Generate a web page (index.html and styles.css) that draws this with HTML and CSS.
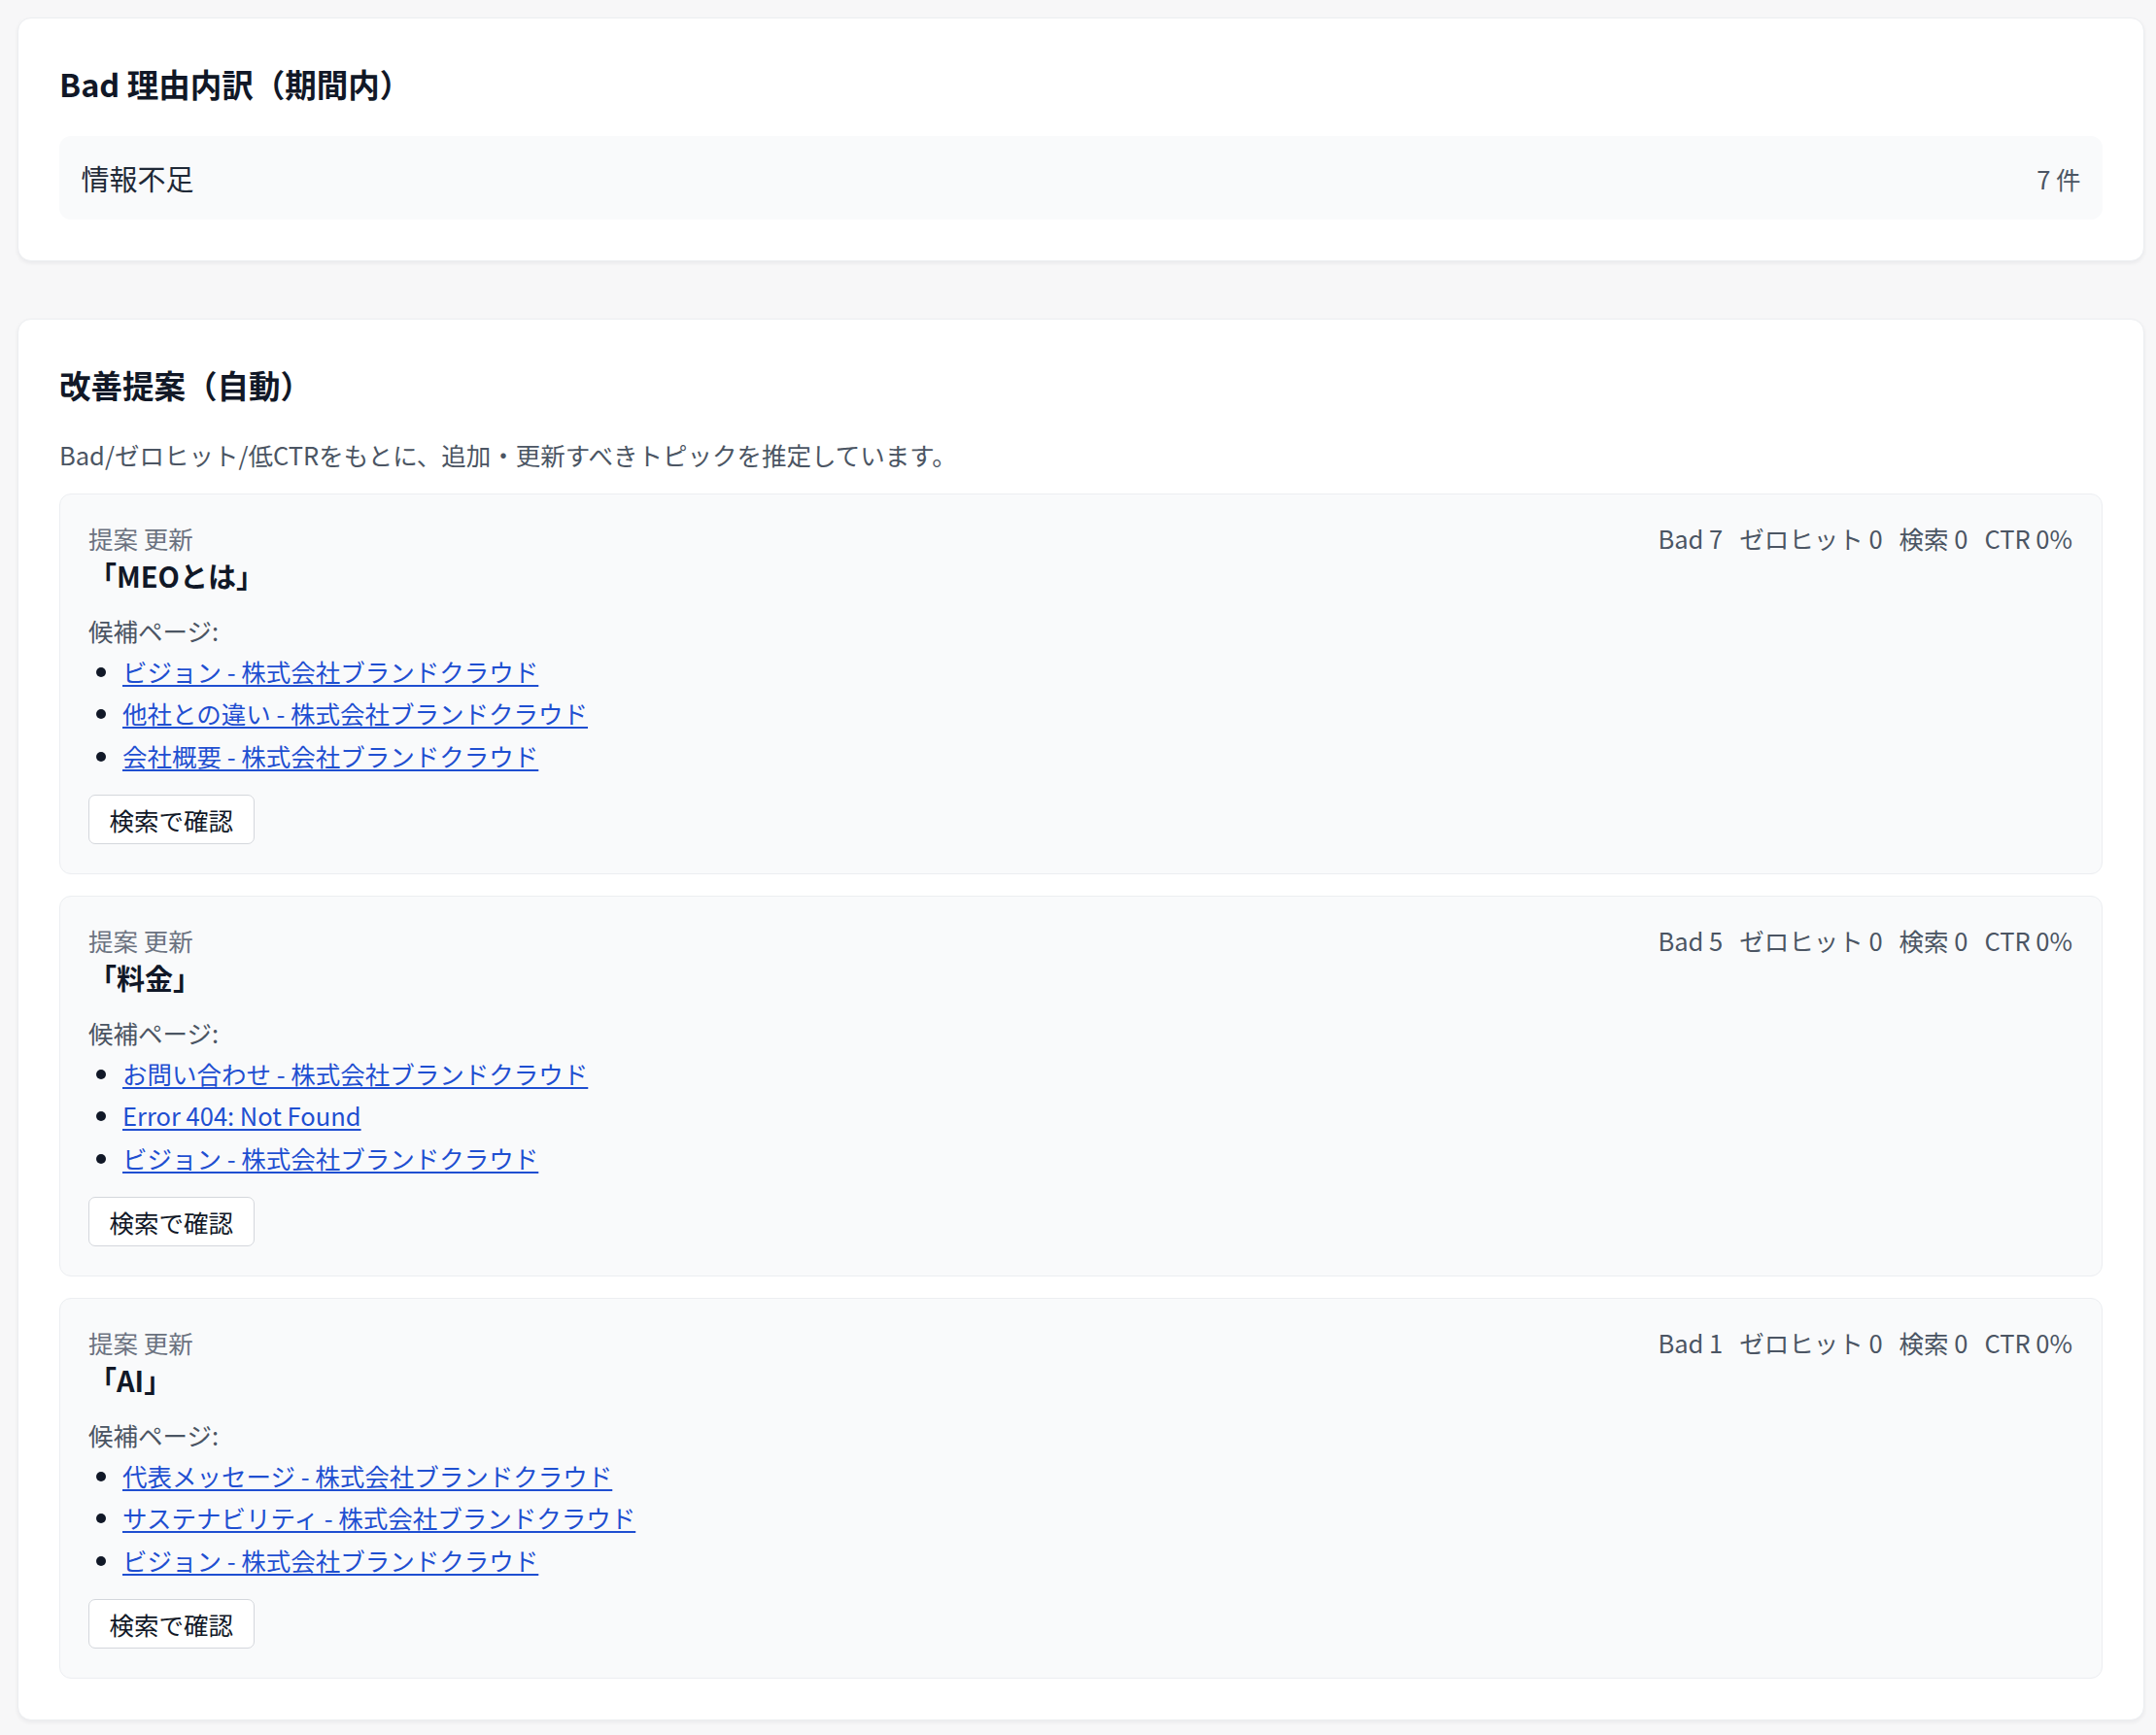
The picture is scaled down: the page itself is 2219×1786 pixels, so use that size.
FILE: index.html
```html
<!DOCTYPE html>
<html lang="ja">
<head>
<meta charset="utf-8">
<title>Bad 理由内訳 / 改善提案</title>
<link rel="stylesheet" href="styles.css">
</head>
<body>
<main class="page">
  <section class="card">
    <h2 class="card-title">Bad 理由内訳（期間内）</h2>
    <div class="reason-row">
      <span class="reason-name">情報不足</span>
      <span class="reason-count">7 件</span>
    </div>
  </section>

  <section class="card">
    <h2 class="card-title">改善提案（自動）</h2>
    <p class="card-desc">Bad/ゼロヒット/低CTRをもとに、追加・更新すべきトピックを推定しています。</p>
    <div class="suggest-list">
      <article class="suggest">
        <div class="suggest-head">
          <div class="suggest-info">
            <div class="suggest-meta">提案 更新</div>
            <div class="suggest-title">「MEOとは」</div>
          </div>
          <div class="suggest-stats"><span>Bad 7</span><span>ゼロヒット 0</span><span>検索 0</span><span>CTR 0%</span></div>
        </div>
        <div class="cand-label">候補ページ:</div>
        <ul class="cand-list">
          <li><a href="#">ビジョン - 株式会社ブランドクラウド</a></li>
          <li><a href="#">他社との違い - 株式会社ブランドクラウド</a></li>
          <li><a href="#">会社概要 - 株式会社ブランドクラウド</a></li>
        </ul>
        <div class="suggest-actions"><button class="check-btn" type="button">検索で確認</button></div>
      </article>

      <article class="suggest">
        <div class="suggest-head">
          <div class="suggest-info">
            <div class="suggest-meta">提案 更新</div>
            <div class="suggest-title">「料金」</div>
          </div>
          <div class="suggest-stats"><span>Bad 5</span><span>ゼロヒット 0</span><span>検索 0</span><span>CTR 0%</span></div>
        </div>
        <div class="cand-label">候補ページ:</div>
        <ul class="cand-list">
          <li><a href="#">お問い合わせ - 株式会社ブランドクラウド</a></li>
          <li><a href="#">Error 404: Not Found</a></li>
          <li><a href="#">ビジョン - 株式会社ブランドクラウド</a></li>
        </ul>
        <div class="suggest-actions"><button class="check-btn" type="button">検索で確認</button></div>
      </article>

      <article class="suggest">
        <div class="suggest-head">
          <div class="suggest-info">
            <div class="suggest-meta">提案 更新</div>
            <div class="suggest-title">「AI」</div>
          </div>
          <div class="suggest-stats"><span>Bad 1</span><span>ゼロヒット 0</span><span>検索 0</span><span>CTR 0%</span></div>
        </div>
        <div class="cand-label">候補ページ:</div>
        <ul class="cand-list">
          <li><a href="#">代表メッセージ - 株式会社ブランドクラウド</a></li>
          <li><a href="#">サステナビリティ - 株式会社ブランドクラウド</a></li>
          <li><a href="#">ビジョン - 株式会社ブランドクラウド</a></li>
        </ul>
        <div class="suggest-actions"><button class="check-btn" type="button">検索で確認</button></div>
      </article>
    </div>
  </section>
</main>
</body>
</html>
```

FILE: styles.css
```css
* {
  box-sizing: border-box;
}

html, body {
  margin: 0;
  padding: 0;
}

body {
  background: #f7f7f8;
  font-family: "Noto Sans CJK JP", "Noto Sans", sans-serif;
  color: #111827;
}

.page {
  display: flex;
  flex-direction: column;
  gap: 59px;
  padding: 18px 12px 14px 18px;
}

.card {
  background: #ffffff;
  border: 1px solid #eceef1;
  border-radius: 14px;
  box-shadow: 0 2px 4px rgba(17, 24, 39, 0.06);
  padding: 42px;
}

.card-title {
  margin: 0 0 30px;
  font-size: 32.5px;
  line-height: 49px;
  font-weight: 700;
  color: #111827;
}

.reason-row {
  display: flex;
  justify-content: space-between;
  align-items: center;
  background: #f9fafb;
  border-radius: 12px;
  padding: 22px 22.5px;
}

.reason-name {
  font-size: 29px;
  line-height: 42px;
  color: #1f2937;
}

.reason-count {
  font-size: 25.5px;
  line-height: 35px;
  color: #4b5563;
}

.card-desc {
  margin: 0 0 23px;
  font-size: 25.5px;
  line-height: 35px;
  color: #4b5563;
}

.suggest-list {
  display: flex;
  flex-direction: column;
  gap: 22.5px;
}

.suggest {
  background: #f9fafb;
  border: 1px solid #eceef1;
  border-radius: 12px;
  padding: 27px 30px 30px 29px;
}

.suggest-head {
  display: flex;
  justify-content: space-between;
  align-items: flex-start;
}

.suggest-meta {
  font-size: 25.5px;
  line-height: 35px;
  color: #6b7280;
}

.suggest-title {
  font-size: 29px;
  line-height: 42px;
  font-weight: 700;
  color: #111827;
}

.suggest-stats {
  display: flex;
  gap: 17px;
  font-size: 25.5px;
  line-height: 35px;
  color: #4b5563;
}

.cand-label {
  margin-top: 17.5px;
  font-size: 25.5px;
  line-height: 35px;
  color: #4b5563;
}

.cand-list {
  margin: 7px 0 0;
  padding-left: 35px;
  list-style: disc;
  color: #111827;
}

.cand-list li {
  font-size: 25.5px;
  line-height: 35px;
}

.cand-list li + li {
  margin-top: 8.5px;
}

.cand-list a {
  color: #1f4fd1;
  text-decoration: underline;
  text-underline-offset: 3px;
}

.suggest-actions {
  margin-top: 23px;
  display: flex;
}

.check-btn {
  font-family: inherit;
  font-size: 25.5px;
  line-height: 35px;
  color: #111827;
  background: #ffffff;
  border: 1px solid #d4d7dc;
  border-radius: 7px;
  padding: 7px 20.5px;
}
```
